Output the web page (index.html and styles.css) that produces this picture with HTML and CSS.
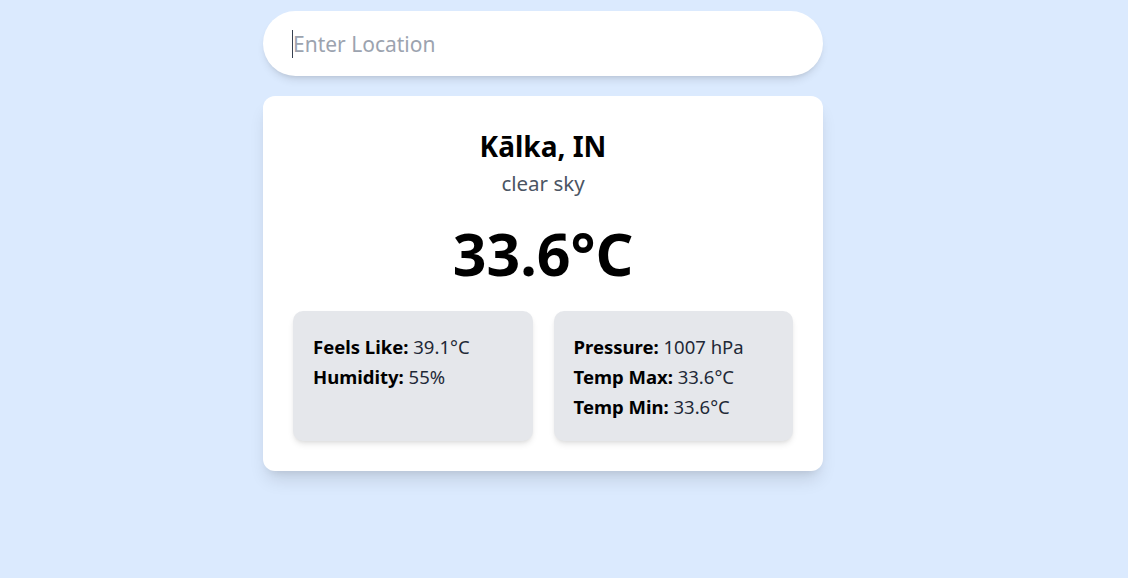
FILE: index.html
```html
<!DOCTYPE html>
<html lang="en">
<head>
<meta charset="utf-8">
<title>Weather</title>
<link rel="stylesheet" href="styles.css">
</head>
<body>
<main class="page">
  <div class="column">
    <div class="search">
      <span class="caret"></span>
      <input class="search-input" type="text" placeholder="Enter Location">
    </div>
    <section class="card">
      <h1 class="city">Kālka, IN</h1>
      <p class="desc">clear sky</p>
      <p class="temp">33.6°C</p>
      <div class="details">
        <div class="box">
          <p><b>Feels Like:</b> 39.1°C</p>
          <p><b>Humidity:</b> 55%</p>
        </div>
        <div class="box">
          <p><b>Pressure:</b> 1007 hPa</p>
          <p><b>Temp Max:</b> 33.6°C</p>
          <p><b>Temp Min:</b> 33.6°C</p>
        </div>
      </div>
    </section>
  </div>
</main>
</body>
</html>
```
FILE: styles.css
```css
* { box-sizing: border-box; }
html, body { margin: 0; padding: 0; }
body {
  background: #dbeafe;
  font-family: "Noto Sans", "Open Sans", sans-serif;
  color: #000;
  min-height: 578px;
}
.page {
  display: flex;
  justify-content: center;
  padding: 11px 42px 0 0;
}
.column {
  width: 560px;
  display: flex;
  flex-direction: column;
  gap: 20px;
}
.search {
  position: relative;
  height: 65px;
  background: #fff;
  border-radius: 999px;
  box-shadow: 0 6px 10px -3px rgba(0,0,0,0.12), 0 3px 5px -3px rgba(0,0,0,0.1);
  display: flex;
  align-items: center;
}
.caret {
  position: absolute;
  left: 292px;
  left: 29px;
  top: 19px;
  width: 1px;
  height: 28px;
  background: #374151;
}
.search-input {
  border: none;
  outline: none;
  background: transparent;
  width: 100%;
  height: 100%;
  padding: 0 30px;
  font-family: inherit;
  font-size: 21px;
  color: #111827;
}
.search-input::placeholder { color: #9ca3af; }
.card {
  background: #fff;
  border-radius: 12px;
  padding: 30px;
  box-shadow: 0 12px 18px -4px rgba(0,0,0,0.12), 0 5px 8px -5px rgba(0,0,0,0.1);
  text-align: center;
}
.city {
  margin: 0;
  font-size: 28px;
  line-height: 40px;
  font-weight: 700;
}
.desc {
  margin: 0;
  font-size: 20.5px;
  line-height: 35px;
  color: #4b5563;
}
.temp {
  margin: 22px 0 0;
  font-size: 59px;
  line-height: 60px;
  height: 88px;
  font-weight: 700;
}
.details {
  display: grid;
  grid-template-columns: 1fr 1fr;
  gap: 21px;
  text-align: left;
}
.box {
  background: #e5e7eb;
  border-radius: 10px;
  padding: 21px 20px 19px;
  height: 130px;
  box-shadow: 0 4px 6px -1px rgba(0,0,0,0.1), 0 2px 4px -2px rgba(0,0,0,0.08);
}
.box p {
  margin: 0;
  font-size: 18.5px;
  line-height: 30px;
  color: #1f2937;
}
.box b { color: #000; font-weight: 700; }
```
